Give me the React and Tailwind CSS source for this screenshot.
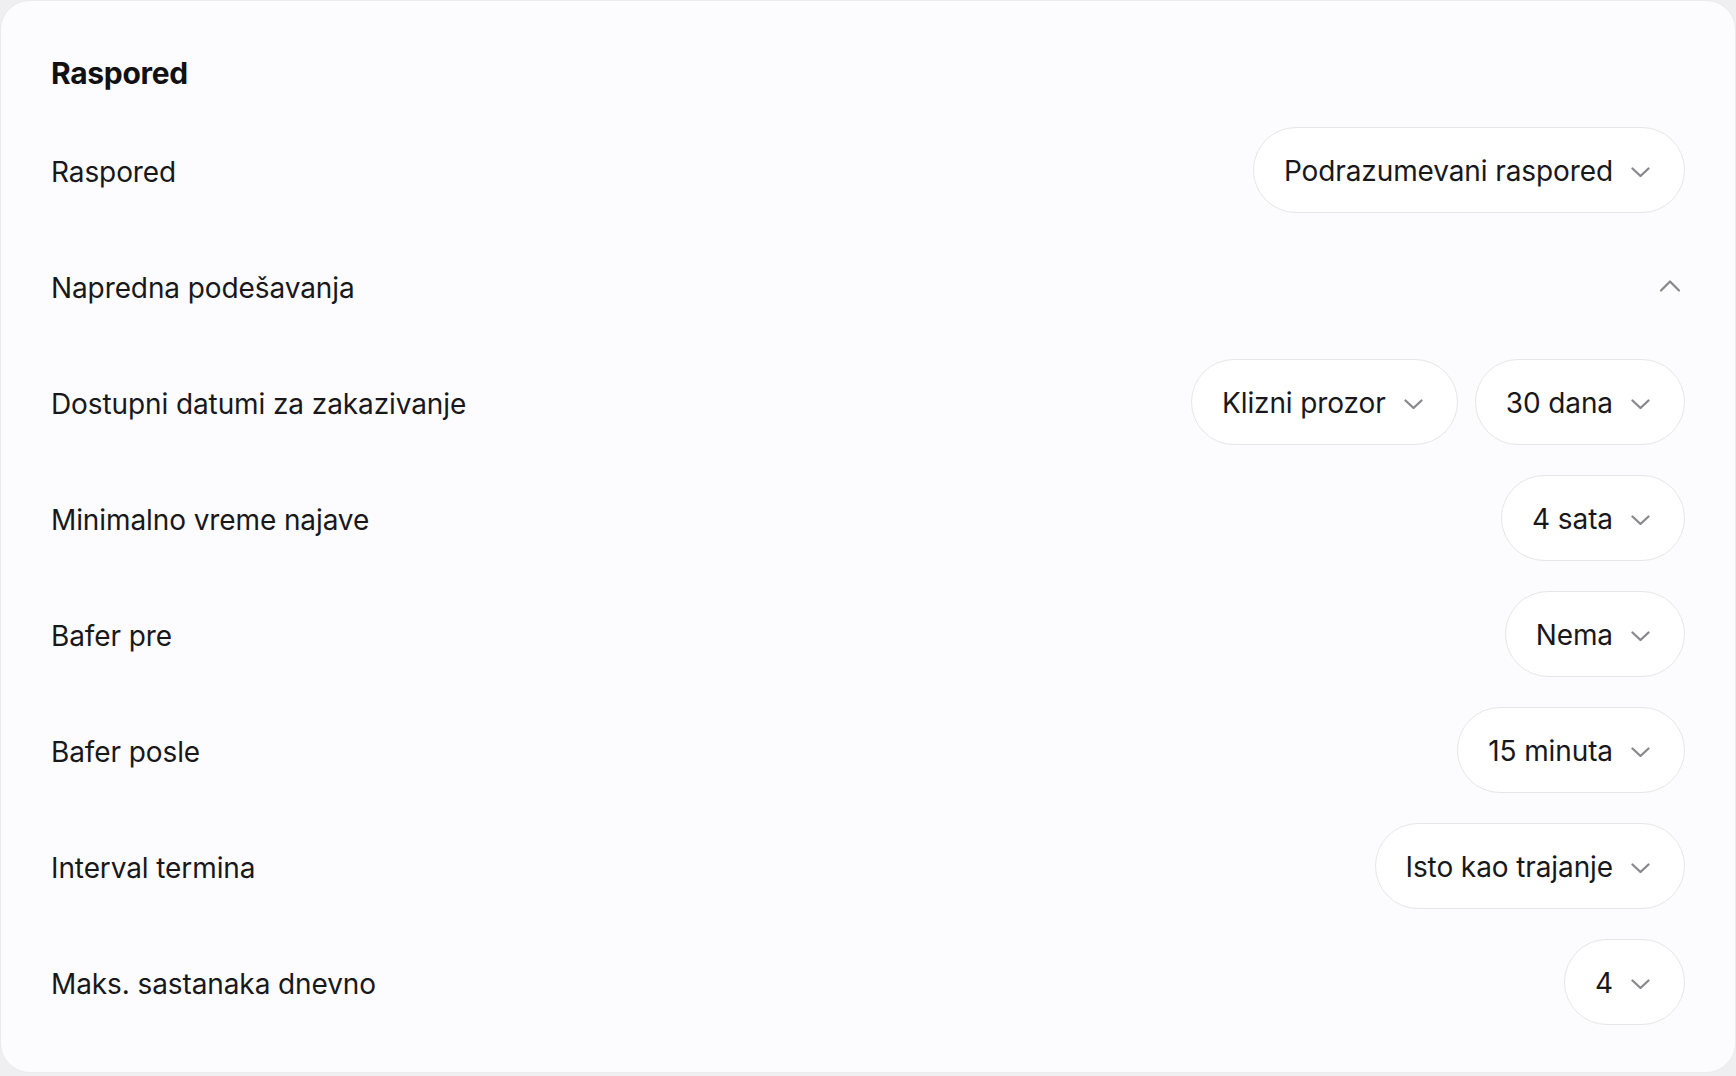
import { ChevronUp } from 'lucide-react';

const rows = [
  { label: 'Dostupni datumi za zakazivanje', values: ['Klizni prozor', '30 dana'] },
  { label: 'Minimalno vreme najave', values: ['4 sata'] },
  { label: 'Bafer pre', values: ['Nema'] },
  { label: 'Bafer posle', values: ['15 minuta'] },
  { label: 'Interval termina', values: ['Isto kao trajanje'] },
  { label: 'Maks. sastanaka dnevno', values: ['4'] },
];

function Chevron() {
  return (
    <svg width="19" height="11" viewBox="0 0 19 11" fill="none" className="mt-1 shrink-0">
      <path d="M1.5 1.5 9.5 9l8-7.5" stroke="#88888d" strokeWidth="2.3" strokeLinecap="round" strokeLinejoin="round" />
    </svg>
  );
}

function SelectPill({ value }) {
  return (
    <button className="flex h-[86px] items-center gap-[18px] rounded-full border-[1.5px] border-[#e6e6e9] bg-white pl-[30px] pr-[34px] text-[28px] tracking-[-0.1px] text-[#18181b]">
      <span className="pt-0.5">{value}</span>
      <Chevron />
    </button>
  );
}

function Row({ label, children }) {
  return (
    <div className="flex h-[86px] items-center justify-between">
      <span className="pt-1 text-[28px] tracking-[-0.1px] text-[#18181b]">{label}</span>
      <div className="flex items-center gap-[17px]">{children}</div>
    </div>
  );
}

export default function App() {
  return (
    <div className="min-h-screen bg-[#efeff1]" style={{ fontFamily: 'Inter, "Noto Sans", sans-serif' }}>
      <div className="rounded-[30px] border border-[#ebebee] bg-[#fcfcfe] px-[50px] pb-[47px] pt-[52px]">
        <h2 className="text-[30px] font-bold leading-[40px] tracking-[-0.3px] text-[#111113]">Raspored</h2>

        <div className="mt-[34px] flex flex-col gap-[30px]">
          <Row label="Raspored">
            <SelectPill value="Podrazumevani raspored" />
          </Row>

          <Row label="Napredna podešavanja">
            <ChevronUp size={36} strokeWidth={1.5} className="-mr-[3px] text-[#88888d]" />
          </Row>

          {rows.map((r) => (
            <Row key={r.label} label={r.label}>
              {r.values.map((v) => (
                <SelectPill key={v} value={v} />
              ))}
            </Row>
          ))}
        </div>
      </div>
    </div>
  );
}
